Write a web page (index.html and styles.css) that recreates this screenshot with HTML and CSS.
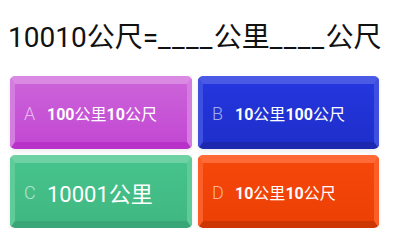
FILE: index.html
```html
<!DOCTYPE html>
<html>
<head>
    <meta charset="UTF-8">
    <meta name="viewport" content="width=device-width, initial-scale=1.0">
    <title>单位换算</title>
    <link rel="stylesheet" href="styles.css">
</head>
<body>
    <div class="question">10010公尺=<span class="blank">____</span>公里<span class="blank">____</span>公尺</div>

    <div class="options">
        <div class="option purple">
            <span class="letter">A</span>
            <span class="answer"><b>100</b>公里<b>10</b>公尺</span>
        </div>
        <div class="option blue">
            <span class="letter">B</span>
            <span class="answer"><b>10</b>公里<b>100</b>公尺</span>
        </div>
        <div class="option green">
            <span class="letter">C</span>
            <span class="answer big">10001公里</span>
        </div>
        <div class="option orange">
            <span class="letter">D</span>
            <span class="answer"><b>10</b>公里<b>10</b>公尺</span>
        </div>
    </div>
</body>
</html>
```

FILE: styles.css
```css
body {
    margin: 0;
    background-color: #ffffff;
    font-family: Roboto, "Noto Sans CJK SC", sans-serif;
}
.question {
    margin: 20px 0 20px 8px;
    font-size: 28px;
    line-height: 36px;
    color: #111111;
    white-space: nowrap;
}
.blank {
    letter-spacing: 1.3px;
}
.options {
    display: grid;
    grid-template-columns: 182px 181px;
    grid-auto-rows: 73px;
    gap: 6px;
    padding-left: 10px;
}
.option {
    display: flex;
    align-items: center;
    border-style: solid;
    border-width: 8px 5px 7px 5px;
    border-radius: 5px;
    padding-left: 9px;
    color: white;
    box-shadow: 0 2px 4px rgba(0, 0, 0, 0.08);
}
.letter {
    width: 23px;
    font-size: 18px;
    font-weight: 300;
    color: rgba(255, 255, 255, 0.6);
}
.answer {
    font-size: 16px;
}
.answer b {
    font-weight: bold;
}
.answer.big {
    font-size: 22px;
}
.purple {
    background: linear-gradient(#cb62d9, #c349d3);
    border-color: #da8ae3 #d57ce0 #b832c9 #d57ce0;
}
.blue {
    background: linear-gradient(#2436dd, #1f2fcc);
    border-color: #4b5ae4 #3f4fe0 #1c28b0 #3f4fe0;
}
.green {
    background: linear-gradient(#46c38c, #41b882);
    border-color: #6fd2a4 #5fcb99 #38a676 #5fcb99;
}
.orange {
    background: linear-gradient(#f6470a, #ec4005);
    border-color: #ff6a36 #fc5e28 #cc3703 #fc5e28;
}
```
